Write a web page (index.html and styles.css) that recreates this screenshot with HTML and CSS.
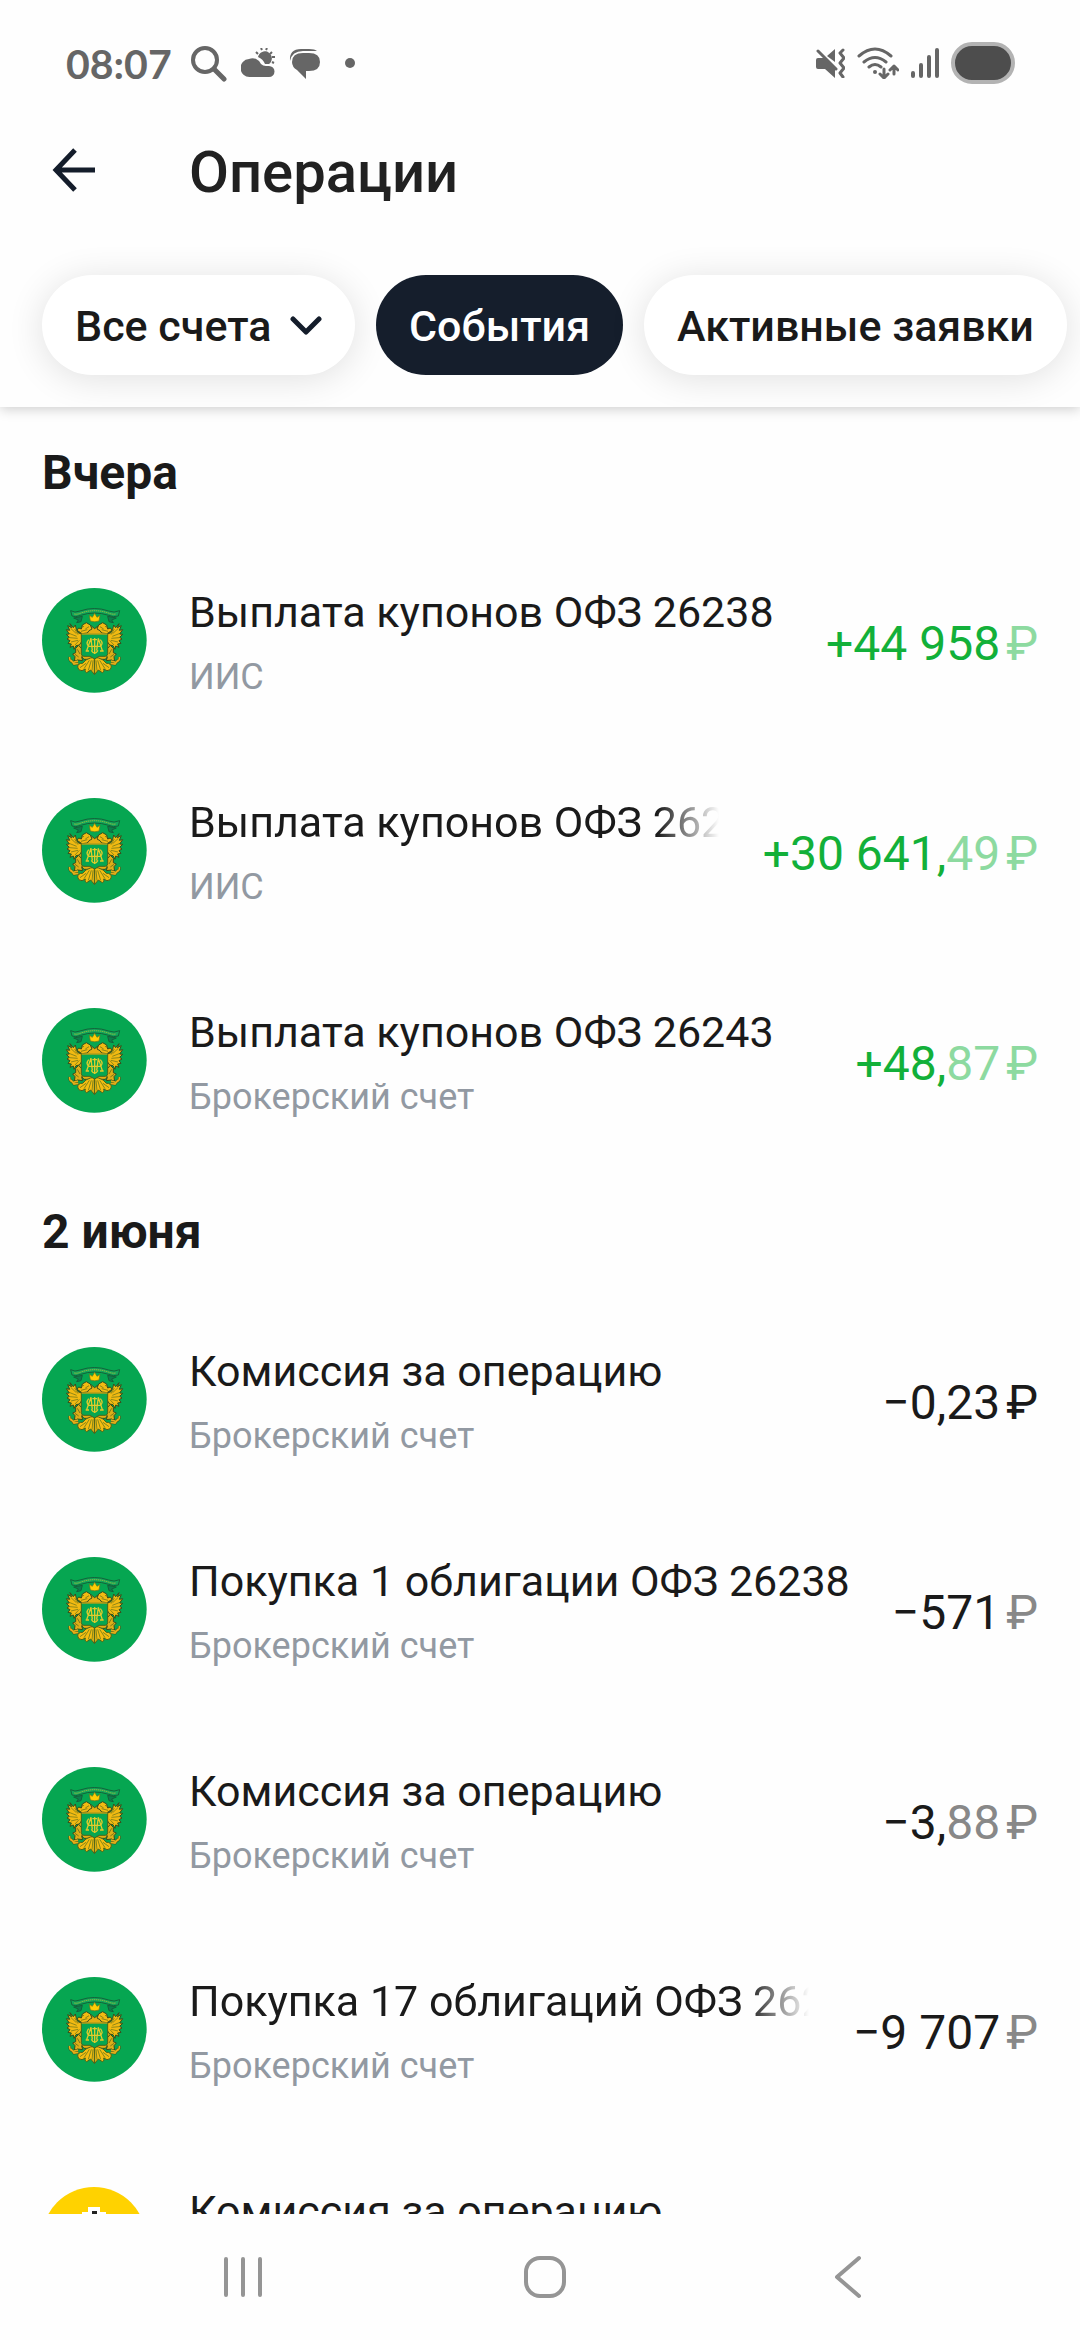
FILE: index.html
```html
<!DOCTYPE html>
<html lang="ru">
<head>
  <meta charset="UTF-8" />
  <title>Операции</title>
  <meta name="viewport" content="width=device-width, initial-scale=1.0" />
  <link rel="stylesheet" href="styles.css">
</head>
<body>

  <!-- Shared logo -->
  <svg class="sprite" aria-hidden="true">
    <symbol id="emblem" viewBox="0 0 315 315">
      <circle cx="157" cy="157" r="157" fill="#06a651" />
      <!-- ribbon -->
      <path d="M86 68 Q98 76 114 69 Q157 54 200 69 Q216 76 233 68 L229 84 Q214 89 200 82 Q157 68 116 82 Q100 89 90 84Z" fill="#12a65a" stroke="#14613a" stroke-width="3" />
      <path d="M97 78 Q108 80 117 75 Q157 61 199 75 Q210 80 222 78" fill="none" stroke="#a6bd3c" stroke-width="3" stroke-dasharray="4 2" />
      <path d="M95 90 L121 85 L117 101 L104 104 L109 96Z M223 90 L197 85 L201 101 L214 104 L209 96Z" fill="#0c7f4c" stroke="#14613a" stroke-width="3" />
      <!-- body behind the shield -->
      <path d="M118 120 L135 124 L148 114 L158 122 L168 114 L181 124 L198 120 L208 146 L206 196 L190 214 H126 L110 196 L108 146Z" fill="#e3ad14" stroke="#374d1d" stroke-width="3" />
      <g id="eagle-side">
        <!-- wing -->
        <path d="M84 107 L89 119 L77 113 L83 127 L73 125 L82 138 L73 139 L82 148 L75 153 L84 158 L78 166 L88 168 L84 178 L94 174 L96 184 L102 173 L112 171 L121 158 L121 139 L108 134 L103 124 L100 111 L94 119Z" fill="#f2ba12" stroke="#374d1d" stroke-width="3" stroke-linejoin="round" />
        <path d="M86 121 L103 137 M81 136 L104 145 M83 149 L107 151 M87 162 L108 157 M98 123 L108 140 M99 171 L112 157" fill="none" stroke="#5d6e1a" stroke-width="2" />
        <!-- head -->
        <path d="M105 127 L110 120 L118 123 L121 111 L133 104 L145 111 L150 123 L141 128 L136 135 L120 137Z" fill="#f2ba12" stroke="#374d1d" stroke-width="3" />
        <path d="M116 119 L126 115 M130 123 L141 116 M117 130 L136 125" stroke="#526618" stroke-width="2" />
        <!-- leg -->
        <path d="M101 181 L110 172 L119 182 L124 200 L119 207 L122 218 L107 216 L97 221 L99 206 L92 198 L101 194Z" fill="#dfae18" stroke="#374d1d" stroke-width="3" />
        <path d="M106 184 L114 198 M99 199 L110 207" stroke="#435b1d" stroke-width="2" />
        <path d="M83 207 Q81 219 94 223 L108 219 M87 216 L96 228 L109 226" fill="none" stroke="#374d1d" stroke-width="8" />
        <path d="M83 207 Q81 219 94 223 L108 219 M87 216 L96 228 L109 226" fill="none" stroke="#e3b018" stroke-width="5" />
        <!-- tail -->
        <path d="M145 210 Q130 214 122 226 Q108 225 107 237 Q108 248 120 248 L130 243 Q126 251 134 254 L146 246 L157 259 L157 208Z" fill="#f4bd11" stroke="#4b621a" stroke-width="3" />
        <path d="M148 217 L139 247 M142 217 L126 242 M153 217 L150 248 M132 226 L114 239" stroke="#48691f" stroke-width="2" />
      </g>
      <use href="#eagle-side" transform="translate(315 0) scale(-1 1)" />
      <!-- crown -->
      <path d="M145 99 L142 82 L151 88 L158 76 L165 88 L174 82 L171 99 Q158 104 145 99Z" fill="#ffcd06" stroke="#6e731c" stroke-width="2" />
      <!-- shield -->
      <path d="M118 138 H197 V197 Q197 204 190 205 H171 L158 213 L144 205 H126 Q118 205 118 197Z" fill="#06a651" stroke="#47661d" stroke-width="3" />
      <path d="M119 138 H196" stroke="#eab817" stroke-width="3" />
      <g fill="none" stroke="#e2cb2a" stroke-width="4">
        <path d="M134 188 L147 151 L151 188 M181 188 L169 151 L164 188 M131 189 H141 M174 189 H185" />
        <path d="M158 150 V198 M151 155 H165 M140 155 Q130 168 141 175 H174 Q186 168 175 155" />
        <path d="M148 187 Q158 204 168 187" />
      </g>
    </symbol>
  </svg>

  <header class="top">
    <div class="status">
      <span class="clock">08:07</span>
      <svg width="37" height="37" viewBox="0 0 37 37" fill="none" stroke="#666" aria-hidden="true">
        <circle cx="15" cy="15" r="12" stroke-width="4" />
        <path d="M24 24 L34 34" stroke-width="5" stroke-linecap="round" />
      </svg>
      <svg width="34" height="30" viewBox="0 0 34 30" fill="#666" aria-hidden="true">
        <path d="M9 29 A9 9 0 0 1 8 11 A9 9 0 0 1 20 16 Q22 18 25 18 H28 A5.500 5.500 0 0 1 28 29Z" />
        <path d="M17 9 A7 7 0 1 1 28 16 H24 Q22 11 17 9Z" />
        <path d="M15 4 L17 6 M20 0 L21 2 M26 0 L25 2 M31 4 L29 6 M34 9 L31 9 M33 15 L31 14" stroke="#666" stroke-width="2" />
      </svg>
      <svg width="32" height="32" viewBox="0 0 32 32" fill="#666" aria-hidden="true">
        <path d="M1 14 Q0 2 12 2 H20 Q26 2 28 4 H14 Q3 4 1 14Z" />
        <path d="M14 6 H20 Q31 6 31 15 Q31 24 20 24 H17 V32 L8 23 Q3 20 3 15 Q3 6 14 6Z" />
      </svg>
      <span class="dot"></span>
      <div class="status-right">
        <svg width="30" height="30" viewBox="0 0 30 30" fill="#666" aria-hidden="true">
          <path d="M3 10 H9 L20 20 V30 L10 21 H3 Q1 21 1 19 V12 Q1 10 3 10Z M20 1 V14 L12 8Z" />
          <path d="M3 3 L21 21 M28 2 L25 5 L29 10 L25 15 L29 20 L25 25 L28 29" fill="none" stroke="#666" stroke-width="3" stroke-linecap="round" stroke-linejoin="round" />
        </svg>
        <svg width="42" height="32" viewBox="0 0 42 32" fill="none" stroke="#666" stroke-width="3" stroke-linecap="round" stroke-linejoin="round" aria-hidden="true">
          <path d="M2 9 Q18 -5 34 9 M7 15 Q18 6 29 15 M12 20 Q18 15 24 20" />
          <circle cx="18" cy="25" r="2" fill="#666" stroke="none" />
          <path d="M27 22 V31 M23 27 L27 31 L31 27 M37 27 V19 M33 23 L37 19 L41 23" />
        </svg>
        <svg width="28" height="30" viewBox="0 0 28 30" stroke="#666" stroke-width="4" stroke-linecap="round" aria-hidden="true">
          <path d="M2 25 V28 M10 17 V28 M18 9 V28 M26 2 V28" />
        </svg>
        <span class="battery"></span>
      </div>
    </div>

    <div class="title-bar">
      <button class="back" aria-label="Назад">
        <svg width="44" height="44" viewBox="0 0 44 44" fill="none" stroke="#141d2b" stroke-width="5" aria-hidden="true">
          <path d="M43 22 H5 M23 2 L4 22 L23 42" />
        </svg>
      </button>
      <h1>Операции</h1>
    </div>

    <div class="filters">
      <label class="chip">
        <select aria-label="Счета">
          <option>Все счета</option>
        </select>
        <svg width="32" height="20" viewBox="0 0 32 20" fill="none" stroke="#141d2b" stroke-width="5" stroke-linecap="round" stroke-linejoin="round" aria-hidden="true">
          <path d="M3 3 L16 16 L29 3" />
        </svg>
      </label>
      <button class="chip active">События</button>
      <button class="chip">Активные заявки</button>
    </div>
  </header>

  <main>
    <h2>Вчера</h2>
    <ul>
      <li class="row">
        <svg class="logo"><use href="#emblem" /></svg>
        <div class="info">
          <p class="name">Выплата купонов ОФЗ 26238</p>
          <p class="account">ИИС</p>
        </div>
        <p class="amount plus">+44 958<span class="cur light">₽</span></p>
      </li>
      <li class="row">
        <svg class="logo"><use href="#emblem" /></svg>
        <div class="info">
          <p class="name fade">Выплата купонов ОФЗ 26238</p>
          <p class="account">ИИС</p>
        </div>
        <p class="amount plus">+30 641,<span class="light">49</span><span class="cur light">₽</span></p>
      </li>
      <li class="row">
        <svg class="logo"><use href="#emblem" /></svg>
        <div class="info">
          <p class="name">Выплата купонов ОФЗ 26243</p>
          <p class="account">Брокерский счет</p>
        </div>
        <p class="amount plus">+48,<span class="light">87</span><span class="cur light">₽</span></p>
      </li>
    </ul>

    <h2>2 июня</h2>
    <ul>
      <li class="row">
        <svg class="logo"><use href="#emblem" /></svg>
        <div class="info">
          <p class="name">Комиссия за операцию</p>
          <p class="account">Брокерский счет</p>
        </div>
        <p class="amount">−0,23<span class="cur">₽</span></p>
      </li>
      <li class="row">
        <svg class="logo"><use href="#emblem" /></svg>
        <div class="info">
          <p class="name">Покупка 1 облигации ОФЗ 26238</p>
          <p class="account">Брокерский счет</p>
        </div>
        <p class="amount">−571<span class="cur light">₽</span></p>
      </li>
      <li class="row">
        <svg class="logo"><use href="#emblem" /></svg>
        <div class="info">
          <p class="name">Комиссия за операцию</p>
          <p class="account">Брокерский счет</p>
        </div>
        <p class="amount">−3,<span class="light">88</span><span class="cur light">₽</span></p>
      </li>
      <li class="row">
        <svg class="logo"><use href="#emblem" /></svg>
        <div class="info">
          <p class="name fade">Покупка 17 облигаций ОФЗ 26238</p>
          <p class="account">Брокерский счет</p>
        </div>
        <p class="amount">−9 707<span class="cur light">₽</span></p>
      </li>
      <li class="row">
        <svg class="logo" viewBox="0 0 105 105">
          <circle cx="52" cy="52" r="52" fill="#ffd200" />
          <path d="M46 20 H58 V25 H64 V40 H40 V25 H46Z" fill="#fff" />
          <path d="M50 24 H55 V40 H50Z" fill="#222" />
        </svg>
        <div class="info">
          <p class="name">Комиссия за операцию</p>
        </div>
      </li>
    </ul>
  </main>

  <nav class="sys-nav">
    <button aria-label="Недавние">
      <svg width="44" height="44" viewBox="0 0 44 44" fill="none" stroke="#959595" stroke-width="4" stroke-linecap="round">
        <path d="M5 4 V40 M22 4 V40 M39 4 V40" />
      </svg>
    </button>
    <button aria-label="Домой">
      <svg width="44" height="44" viewBox="0 0 44 44" fill="none" stroke="#959595" stroke-width="4">
        <rect x="3" y="3" width="38" height="38" rx="14" />
      </svg>
    </button>
    <button aria-label="Назад">
      <svg width="44" height="44" viewBox="0 0 44 44" fill="none" stroke="#959595" stroke-width="4" stroke-linecap="round" stroke-linejoin="round">
        <path d="M33 3 L11 22 L33 41" />
      </svg>
    </button>
  </nav>

</body>
</html>
```
FILE: styles.css
```css
* {
  box-sizing: border-box;
}

body {
  font-family: Roboto, "Noto Sans", sans-serif;
  background-color: #fefefe;
  color: #1a1a1a;
  margin: 0;
  height: 100vh;
  display: flex;
  flex-direction: column;
}

h1, h2, p, ul {
  margin: 0;
  padding: 0;
}

ul {
  list-style: none;
}

button, select {
  font-family: inherit;
  color: inherit;
  border: none;
  background: none;
  padding: 0;
}

svg {
  display: block;
  flex-shrink: 0;
}

.sprite {
  position: absolute;
  width: 0;
  height: 0;
}

/* Header */
.top {
  position: relative;
  flex-shrink: 0;
  background-color: #fefefe;
  box-shadow: 0 2px 12px rgba(0, 0, 0, 0.2);
}

.status {
  display: flex;
  align-items: center;
  gap: 14px;
  padding: 28px 65px 0 66px;
  height: 98px;
}

.clock {
  font-family: Lato, sans-serif;
  font-size: 41px;
  font-weight: bold;
  color: #666;
  margin-right: 4px;
}

.dot {
  width: 10px;
  height: 10px;
  margin-left: 10px;
  border-radius: 50%;
  background-color: #666;
}

.status-right {
  display: flex;
  align-items: center;
  gap: 12px;
  margin-left: auto;
}

.battery {
  width: 64px;
  height: 42px;
  border: 4px solid #b3b3b3;
  border-radius: 21px;
  background-color: #4d4d4d;
}

.title-bar {
  display: flex;
  align-items: center;
  height: 147px;
  padding-left: 52px;
}

.back {
  width: 137px;
  margin-bottom: 4px;
}

h1 {
  font-size: 58px;
  font-weight: 500;
  color: #212121;
}

.filters {
  display: flex;
  gap: 21px;
  padding: 30px 0 32px 42px;
  overflow: hidden;
}

.chip {
  display: flex;
  align-items: center;
  flex-shrink: 0;
  gap: 18px;
  height: 100px;
  padding: 2px 33px 0;
  border-radius: 50px;
  font-size: 43px;
  font-weight: 500;
  white-space: nowrap;
  background-color: #fff;
  box-shadow: 0 4px 36px rgba(0, 0, 0, 0.12);
}

.chip select {
  appearance: none;
  font-size: 43px;
  font-weight: 500;
}

.chip.active {
  background-color: #151e2c;
  color: #fff;
  box-shadow: none;
}

/* Operations */
main {
  flex: 1;
  min-height: 0;
  overflow: hidden;
}

h2 {
  height: 129px;
  padding: 34px 42px 0;
  font-size: 48px;
  line-height: 64px;
}

.row {
  display: flex;
  align-items: center;
  height: 210px;
  padding: 8px 42px 0;
}

.logo {
  width: 105px;
  height: 105px;
  margin-right: 42px;
  margin-bottom: 10px;
}

.info {
  flex: 1;
  min-width: 0;
  height: 130px;
  margin-right: 40px;
}

.name {
  font-size: 43px;
  line-height: 64px;
  white-space: nowrap;
  overflow: hidden;
}

.fade {
  mask-image: linear-gradient(to left, transparent 4px, #000 66px);
}

.account {
  font-size: 36px;
  line-height: 66px;
  color: #9299a2;
}

.amount {
  margin-bottom: 2px;
  font-size: 48px;
  line-height: 64px;
  white-space: nowrap;
}

.cur {
  margin-left: 6px;
}

.light {
  color: #888;
}

.plus {
  color: #12b039;
}

.plus .light {
  color: #8ddaa0;
}

/* System navigation */
.sys-nav {
  display: flex;
  justify-content: space-around;
  align-items: center;
  flex-shrink: 0;
  height: 126px;
  padding: 0 81px 0 92px;
}
```
